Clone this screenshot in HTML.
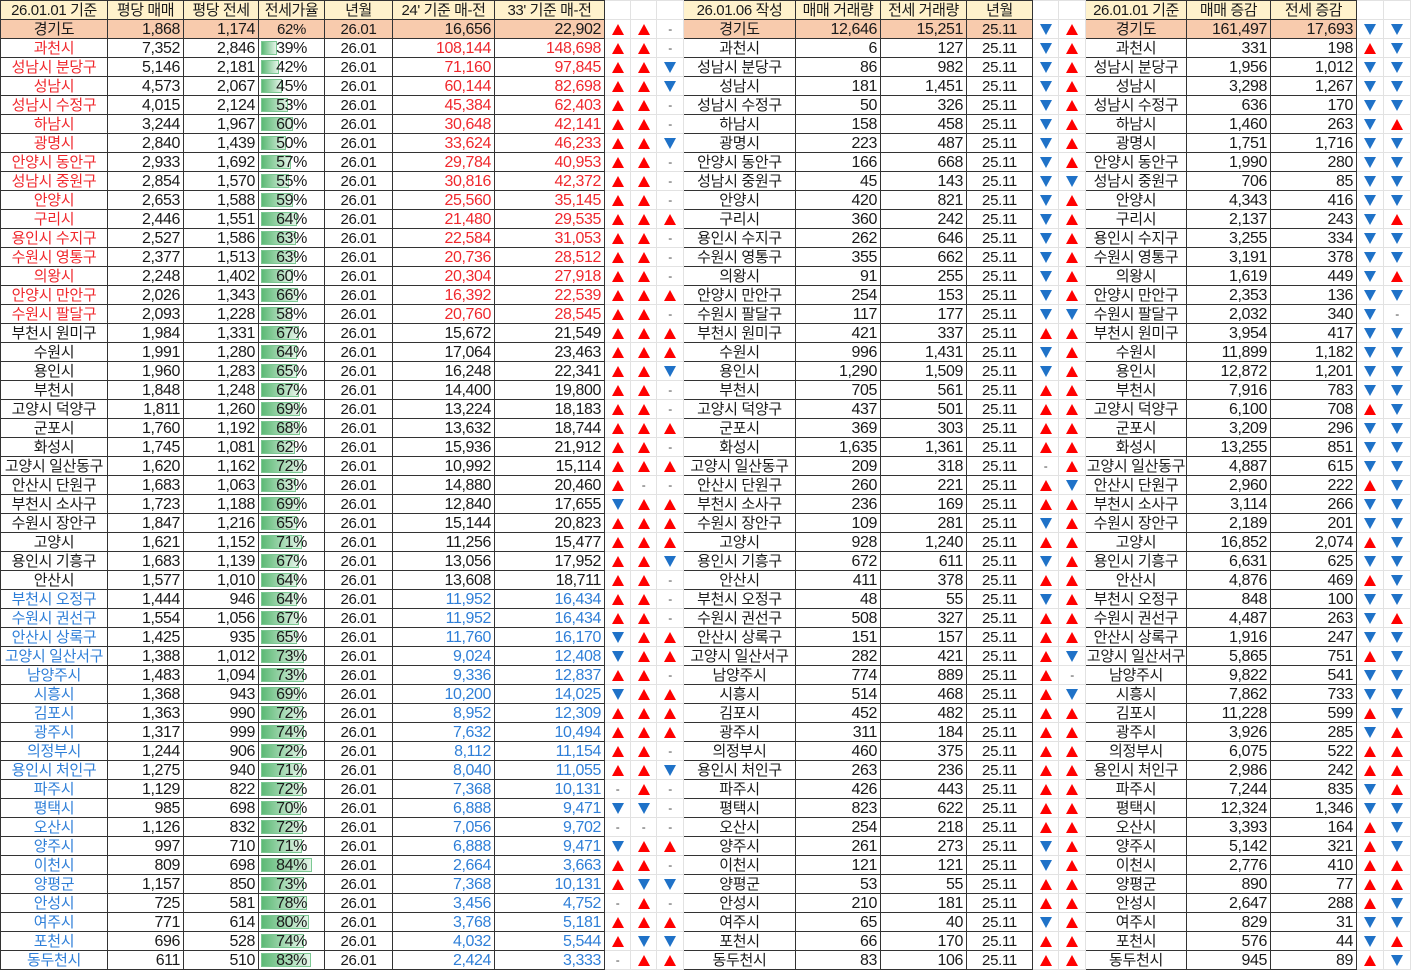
<!DOCTYPE html>
<html><head><meta charset="utf-8"><style>
body{margin:0;background:#fff;width:1411px;height:970px;overflow:hidden}
table{border-collapse:collapse;table-layout:fixed;font-family:"Liberation Sans","Noto Sans CJK KR",sans-serif;font-size:16px;color:#1a1a1a;width:1410px}
tr{height:19px}
td{border:1px solid #333;padding:0 3px 0 0;text-align:right;white-space:nowrap;overflow:hidden;line-height:17px;letter-spacing:-0.4px}
td.c{text-align:center;padding:0;font-size:15px;letter-spacing:-0.3px}
tr.h td{background:#fff2cc;text-align:center;padding:0;font-size:15px}
tr.g td{background:#f8cbad}
tr.h td.a,tr.h td.u,tr.h td.d,tr.h td.n,tr.g td.u,tr.g td.d,tr.g td.n{background:#fff}
td.u,td.d,td.n,td.a{border:1px solid #e2e2e2;text-align:center;padding:0}
td.u::after{content:"";display:inline-block;border-left:6px solid transparent;border-right:6px solid transparent;border-bottom:11px solid #f00;vertical-align:-1px}
td.d::after{content:"";display:inline-block;border-left:6px solid transparent;border-right:6px solid transparent;border-top:11px solid #1f72c8;vertical-align:-1px}
td.n::after{content:"-";font-size:12px;color:#444}
tr.R .k{color:#f0282d}
tr.B .k{color:#2f7fd8}
td.p{position:relative;text-align:center;padding:0}
td.p s{position:absolute;left:2px;top:2px;bottom:2px;background:linear-gradient(90deg,#5cb975,#e4f4e8);border:1px solid #7cc893;box-sizing:border-box}
td.p b{position:relative;font-weight:normal}
</style></head><body>
<table>
<colgroup><col style="width:107px"><col style="width:76px"><col style="width:75px"><col style="width:66px"><col style="width:68px"><col style="width:102px"><col style="width:110px"><col style="width:26px"><col style="width:26px"><col style="width:27px"><col style="width:112px"><col style="width:85px"><col style="width:86px"><col style="width:66px"><col style="width:26px"><col style="width:27px"><col style="width:101px"><col style="width:84px"><col style="width:86px"><col style="width:27px"><col style="width:27px"></colgroup>
<tr class=h><td>26.01.01 기준<td>평당 매매<td>평당 전세<td>전세가율<td>년월<td>24' 기준 매-전<td>33' 기준 매-전<td class=a><td class=a><td class=a><td>26.01.06 작성<td>매매 거래량<td>전세 거래량<td>년월<td class=a><td class=a><td>26.01.01 기준<td>매매 증감<td>전세 증감<td class=a><td class=a></tr>
<tr class=g><td class=c>경기도<td>1,868<td>1,174<td class=c>62%<td class=c>26.01<td>16,656<td>22,902<td class=u><td class=u><td class=n><td class=c>경기도<td>12,646<td>15,251<td class=c>25.11<td class=d><td class=u><td class=c>경기도<td>161,497<td>17,693<td class=d><td class=d></tr>
<tr class=R><td class="c k">과천시<td>7,352<td>2,846<td class=p><s style="width:16px"></s><b>39%</b><td class=c>26.01<td class=k>108,144<td class=k>148,698<td class=u><td class=u><td class=n><td class=c>과천시<td>6<td>127<td class=c>25.11<td class=d><td class=u><td class=c>과천시<td>331<td>198<td class=u><td class=d></tr>
<tr class=R><td class="c k">성남시 분당구<td>5,146<td>2,181<td class=p><s style="width:18px"></s><b>42%</b><td class=c>26.01<td class=k>71,160<td class=k>97,845<td class=u><td class=u><td class=d><td class=c>성남시 분당구<td>86<td>982<td class=c>25.11<td class=d><td class=u><td class=c>성남시 분당구<td>1,956<td>1,012<td class=d><td class=d></tr>
<tr class=R><td class="c k">성남시<td>4,573<td>2,067<td class=p><s style="width:21px"></s><b>45%</b><td class=c>26.01<td class=k>60,144<td class=k>82,698<td class=u><td class=u><td class=d><td class=c>성남시<td>181<td>1,451<td class=c>25.11<td class=d><td class=u><td class=c>성남시<td>3,298<td>1,267<td class=d><td class=d></tr>
<tr class=R><td class="c k">성남시 수정구<td>4,015<td>2,124<td class=p><s style="width:27px"></s><b>53%</b><td class=c>26.01<td class=k>45,384<td class=k>62,403<td class=u><td class=u><td class=n><td class=c>성남시 수정구<td>50<td>326<td class=c>25.11<td class=d><td class=u><td class=c>성남시 수정구<td>636<td>170<td class=d><td class=d></tr>
<tr class=R><td class="c k">하남시<td>3,244<td>1,967<td class=p><s style="width:32px"></s><b>60%</b><td class=c>26.01<td class=k>30,648<td class=k>42,141<td class=u><td class=u><td class=n><td class=c>하남시<td>158<td>458<td class=c>25.11<td class=d><td class=u><td class=c>하남시<td>1,460<td>263<td class=d><td class=u></tr>
<tr class=R><td class="c k">광명시<td>2,840<td>1,439<td class=p><s style="width:25px"></s><b>50%</b><td class=c>26.01<td class=k>33,624<td class=k>46,233<td class=u><td class=u><td class=d><td class=c>광명시<td>223<td>487<td class=c>25.11<td class=d><td class=u><td class=c>광명시<td>1,751<td>1,716<td class=d><td class=d></tr>
<tr class=R><td class="c k">안양시 동안구<td>2,933<td>1,692<td class=p><s style="width:30px"></s><b>57%</b><td class=c>26.01<td class=k>29,784<td class=k>40,953<td class=u><td class=u><td class=n><td class=c>안양시 동안구<td>166<td>668<td class=c>25.11<td class=d><td class=u><td class=c>안양시 동안구<td>1,990<td>280<td class=d><td class=d></tr>
<tr class=R><td class="c k">성남시 중원구<td>2,854<td>1,570<td class=p><s style="width:28px"></s><b>55%</b><td class=c>26.01<td class=k>30,816<td class=k>42,372<td class=u><td class=u><td class=n><td class=c>성남시 중원구<td>45<td>143<td class=c>25.11<td class=d><td class=d><td class=c>성남시 중원구<td>706<td>85<td class=d><td class=d></tr>
<tr class=R><td class="c k">안양시<td>2,653<td>1,588<td class=p><s style="width:32px"></s><b>59%</b><td class=c>26.01<td class=k>25,560<td class=k>35,145<td class=u><td class=u><td class=n><td class=c>안양시<td>420<td>821<td class=c>25.11<td class=d><td class=u><td class=c>안양시<td>4,343<td>416<td class=d><td class=d></tr>
<tr class=R><td class="c k">구리시<td>2,446<td>1,551<td class=p><s style="width:36px"></s><b>64%</b><td class=c>26.01<td class=k>21,480<td class=k>29,535<td class=u><td class=u><td class=u><td class=c>구리시<td>360<td>242<td class=c>25.11<td class=d><td class=u><td class=c>구리시<td>2,137<td>243<td class=d><td class=u></tr>
<tr class=R><td class="c k">용인시 수지구<td>2,527<td>1,586<td class=p><s style="width:35px"></s><b>63%</b><td class=c>26.01<td class=k>22,584<td class=k>31,053<td class=u><td class=u><td class=n><td class=c>용인시 수지구<td>262<td>646<td class=c>25.11<td class=d><td class=u><td class=c>용인시 수지구<td>3,255<td>334<td class=d><td class=d></tr>
<tr class=R><td class="c k">수원시 영통구<td>2,377<td>1,513<td class=p><s style="width:35px"></s><b>63%</b><td class=c>26.01<td class=k>20,736<td class=k>28,512<td class=u><td class=u><td class=n><td class=c>수원시 영통구<td>355<td>662<td class=c>25.11<td class=d><td class=u><td class=c>수원시 영통구<td>3,191<td>378<td class=d><td class=d></tr>
<tr class=R><td class="c k">의왕시<td>2,248<td>1,402<td class=p><s style="width:32px"></s><b>60%</b><td class=c>26.01<td class=k>20,304<td class=k>27,918<td class=u><td class=u><td class=n><td class=c>의왕시<td>91<td>255<td class=c>25.11<td class=d><td class=u><td class=c>의왕시<td>1,619<td>449<td class=d><td class=u></tr>
<tr class=R><td class="c k">안양시 만안구<td>2,026<td>1,343<td class=p><s style="width:37px"></s><b>66%</b><td class=c>26.01<td class=k>16,392<td class=k>22,539<td class=u><td class=u><td class=u><td class=c>안양시 만안구<td>254<td>153<td class=c>25.11<td class=d><td class=u><td class=c>안양시 만안구<td>2,353<td>136<td class=d><td class=d></tr>
<tr class=R><td class="c k">수원시 팔달구<td>2,093<td>1,228<td class=p><s style="width:31px"></s><b>58%</b><td class=c>26.01<td class=k>20,760<td class=k>28,545<td class=u><td class=u><td class=n><td class=c>수원시 팔달구<td>117<td>177<td class=c>25.11<td class=d><td class=d><td class=c>수원시 팔달구<td>2,032<td>340<td class=d><td class=n></tr>
<tr><td class=c>부천시 원미구<td>1,984<td>1,331<td class=p><s style="width:38px"></s><b>67%</b><td class=c>26.01<td>15,672<td>21,549<td class=u><td class=u><td class=u><td class=c>부천시 원미구<td>421<td>337<td class=c>25.11<td class=u><td class=u><td class=c>부천시 원미구<td>3,954<td>417<td class=d><td class=d></tr>
<tr><td class=c>수원시<td>1,991<td>1,280<td class=p><s style="width:36px"></s><b>64%</b><td class=c>26.01<td>17,064<td>23,463<td class=u><td class=u><td class=u><td class=c>수원시<td>996<td>1,431<td class=c>25.11<td class=d><td class=u><td class=c>수원시<td>11,899<td>1,182<td class=d><td class=d></tr>
<tr><td class=c>용인시<td>1,960<td>1,283<td class=p><s style="width:36px"></s><b>65%</b><td class=c>26.01<td>16,248<td>22,341<td class=u><td class=u><td class=d><td class=c>용인시<td>1,290<td>1,509<td class=c>25.11<td class=d><td class=u><td class=c>용인시<td>12,872<td>1,201<td class=d><td class=d></tr>
<tr><td class=c>부천시<td>1,848<td>1,248<td class=p><s style="width:38px"></s><b>67%</b><td class=c>26.01<td>14,400<td>19,800<td class=u><td class=u><td class=n><td class=c>부천시<td>705<td>561<td class=c>25.11<td class=u><td class=u><td class=c>부천시<td>7,916<td>783<td class=d><td class=d></tr>
<tr><td class=c>고양시 덕양구<td>1,811<td>1,260<td class=p><s style="width:39px"></s><b>69%</b><td class=c>26.01<td>13,224<td>18,183<td class=u><td class=u><td class=n><td class=c>고양시 덕양구<td>437<td>501<td class=c>25.11<td class=u><td class=u><td class=c>고양시 덕양구<td>6,100<td>708<td class=u><td class=d></tr>
<tr><td class=c>군포시<td>1,760<td>1,192<td class=p><s style="width:39px"></s><b>68%</b><td class=c>26.01<td>13,632<td>18,744<td class=u><td class=u><td class=u><td class=c>군포시<td>369<td>303<td class=c>25.11<td class=u><td class=u><td class=c>군포시<td>3,209<td>296<td class=d><td class=d></tr>
<tr><td class=c>화성시<td>1,745<td>1,081<td class=p><s style="width:34px"></s><b>62%</b><td class=c>26.01<td>15,936<td>21,912<td class=u><td class=u><td class=n><td class=c>화성시<td>1,635<td>1,361<td class=c>25.11<td class=u><td class=u><td class=c>화성시<td>13,255<td>851<td class=d><td class=d></tr>
<tr><td class=c>고양시 일산동구<td>1,620<td>1,162<td class=p><s style="width:42px"></s><b>72%</b><td class=c>26.01<td>10,992<td>15,114<td class=u><td class=u><td class=u><td class=c>고양시 일산동구<td>209<td>318<td class=c>25.11<td class=n><td class=u><td class=c>고양시 일산동구<td>4,887<td>615<td class=d><td class=d></tr>
<tr><td class=c>안산시 단원구<td>1,683<td>1,063<td class=p><s style="width:35px"></s><b>63%</b><td class=c>26.01<td>14,880<td>20,460<td class=u><td class=n><td class=n><td class=c>안산시 단원구<td>260<td>221<td class=c>25.11<td class=u><td class=d><td class=c>안산시 단원구<td>2,960<td>222<td class=u><td class=d></tr>
<tr><td class=c>부천시 소사구<td>1,723<td>1,188<td class=p><s style="width:39px"></s><b>69%</b><td class=c>26.01<td>12,840<td>17,655<td class=d><td class=u><td class=u><td class=c>부천시 소사구<td>236<td>169<td class=c>25.11<td class=u><td class=u><td class=c>부천시 소사구<td>3,114<td>266<td class=d><td class=d></tr>
<tr><td class=c>수원시 장안구<td>1,847<td>1,216<td class=p><s style="width:36px"></s><b>65%</b><td class=c>26.01<td>15,144<td>20,823<td class=u><td class=u><td class=u><td class=c>수원시 장안구<td>109<td>281<td class=c>25.11<td class=d><td class=u><td class=c>수원시 장안구<td>2,189<td>201<td class=d><td class=d></tr>
<tr><td class=c>고양시<td>1,621<td>1,152<td class=p><s style="width:41px"></s><b>71%</b><td class=c>26.01<td>11,256<td>15,477<td class=u><td class=u><td class=u><td class=c>고양시<td>928<td>1,240<td class=c>25.11<td class=u><td class=u><td class=c>고양시<td>16,852<td>2,074<td class=u><td class=d></tr>
<tr><td class=c>용인시 기흥구<td>1,683<td>1,139<td class=p><s style="width:38px"></s><b>67%</b><td class=c>26.01<td>13,056<td>17,952<td class=u><td class=u><td class=d><td class=c>용인시 기흥구<td>672<td>611<td class=c>25.11<td class=d><td class=u><td class=c>용인시 기흥구<td>6,631<td>625<td class=d><td class=d></tr>
<tr><td class=c>안산시<td>1,577<td>1,010<td class=p><s style="width:36px"></s><b>64%</b><td class=c>26.01<td>13,608<td>18,711<td class=u><td class=u><td class=n><td class=c>안산시<td>411<td>378<td class=c>25.11<td class=u><td class=u><td class=c>안산시<td>4,876<td>469<td class=u><td class=d></tr>
<tr class=B><td class="c k">부천시 오정구<td>1,444<td>946<td class=p><s style="width:36px"></s><b>64%</b><td class=c>26.01<td class=k>11,952<td class=k>16,434<td class=u><td class=u><td class=n><td class=c>부천시 오정구<td>48<td>55<td class=c>25.11<td class=d><td class=u><td class=c>부천시 오정구<td>848<td>100<td class=d><td class=d></tr>
<tr class=B><td class="c k">수원시 권선구<td>1,554<td>1,056<td class=p><s style="width:38px"></s><b>67%</b><td class=c>26.01<td class=k>11,952<td class=k>16,434<td class=u><td class=u><td class=n><td class=c>수원시 권선구<td>508<td>327<td class=c>25.11<td class=u><td class=u><td class=c>수원시 권선구<td>4,487<td>263<td class=d><td class=u></tr>
<tr class=B><td class="c k">안산시 상록구<td>1,425<td>935<td class=p><s style="width:36px"></s><b>65%</b><td class=c>26.01<td class=k>11,760<td class=k>16,170<td class=d><td class=u><td class=u><td class=c>안산시 상록구<td>151<td>157<td class=c>25.11<td class=u><td class=u><td class=c>안산시 상록구<td>1,916<td>247<td class=d><td class=d></tr>
<tr class=B><td class="c k">고양시 일산서구<td>1,388<td>1,012<td class=p><s style="width:43px"></s><b>73%</b><td class=c>26.01<td class=k>9,024<td class=k>12,408<td class=d><td class=u><td class=u><td class=c>고양시 일산서구<td>282<td>421<td class=c>25.11<td class=u><td class=d><td class=c>고양시 일산서구<td>5,865<td>751<td class=u><td class=d></tr>
<tr class=B><td class="c k">남양주시<td>1,483<td>1,094<td class=p><s style="width:43px"></s><b>73%</b><td class=c>26.01<td class=k>9,336<td class=k>12,837<td class=u><td class=u><td class=n><td class=c>남양주시<td>774<td>889<td class=c>25.11<td class=u><td class=n><td class=c>남양주시<td>9,822<td>541<td class=d><td class=d></tr>
<tr class=B><td class="c k">시흥시<td>1,368<td>943<td class=p><s style="width:39px"></s><b>69%</b><td class=c>26.01<td class=k>10,200<td class=k>14,025<td class=d><td class=u><td class=u><td class=c>시흥시<td>514<td>468<td class=c>25.11<td class=u><td class=d><td class=c>시흥시<td>7,862<td>733<td class=d><td class=d></tr>
<tr class=B><td class="c k">김포시<td>1,363<td>990<td class=p><s style="width:42px"></s><b>72%</b><td class=c>26.01<td class=k>8,952<td class=k>12,309<td class=u><td class=u><td class=u><td class=c>김포시<td>452<td>482<td class=c>25.11<td class=u><td class=u><td class=c>김포시<td>11,228<td>599<td class=u><td class=d></tr>
<tr class=B><td class="c k">광주시<td>1,317<td>999<td class=p><s style="width:43px"></s><b>74%</b><td class=c>26.01<td class=k>7,632<td class=k>10,494<td class=u><td class=u><td class=u><td class=c>광주시<td>311<td>184<td class=c>25.11<td class=u><td class=u><td class=c>광주시<td>3,926<td>285<td class=d><td class=u></tr>
<tr class=B><td class="c k">의정부시<td>1,244<td>906<td class=p><s style="width:42px"></s><b>72%</b><td class=c>26.01<td class=k>8,112<td class=k>11,154<td class=u><td class=u><td class=n><td class=c>의정부시<td>460<td>375<td class=c>25.11<td class=u><td class=u><td class=c>의정부시<td>6,075<td>522<td class=u><td class=u></tr>
<tr class=B><td class="c k">용인시 처인구<td>1,275<td>940<td class=p><s style="width:41px"></s><b>71%</b><td class=c>26.01<td class=k>8,040<td class=k>11,055<td class=u><td class=u><td class=d><td class=c>용인시 처인구<td>263<td>236<td class=c>25.11<td class=u><td class=u><td class=c>용인시 처인구<td>2,986<td>242<td class=u><td class=u></tr>
<tr class=B><td class="c k">파주시<td>1,129<td>822<td class=p><s style="width:42px"></s><b>72%</b><td class=c>26.01<td class=k>7,368<td class=k>10,131<td class=n><td class=u><td class=n><td class=c>파주시<td>426<td>443<td class=c>25.11<td class=u><td class=u><td class=c>파주시<td>7,244<td>835<td class=d><td class=u></tr>
<tr class=B><td class="c k">평택시<td>985<td>698<td class=p><s style="width:40px"></s><b>70%</b><td class=c>26.01<td class=k>6,888<td class=k>9,471<td class=d><td class=d><td class=n><td class=c>평택시<td>823<td>622<td class=c>25.11<td class=u><td class=u><td class=c>평택시<td>12,324<td>1,346<td class=d><td class=d></tr>
<tr class=B><td class="c k">오산시<td>1,126<td>832<td class=p><s style="width:42px"></s><b>72%</b><td class=c>26.01<td class=k>7,056<td class=k>9,702<td class=n><td class=n><td class=n><td class=c>오산시<td>254<td>218<td class=c>25.11<td class=u><td class=u><td class=c>오산시<td>3,393<td>164<td class=u><td class=d></tr>
<tr class=B><td class="c k">양주시<td>997<td>710<td class=p><s style="width:41px"></s><b>71%</b><td class=c>26.01<td class=k>6,888<td class=k>9,471<td class=d><td class=u><td class=u><td class=c>양주시<td>261<td>273<td class=c>25.11<td class=d><td class=u><td class=c>양주시<td>5,142<td>321<td class=u><td class=d></tr>
<tr class=B><td class="c k">이천시<td>809<td>698<td class=p><s style="width:51px"></s><b>84%</b><td class=c>26.01<td class=k>2,664<td class=k>3,663<td class=u><td class=u><td class=n><td class=c>이천시<td>121<td>121<td class=c>25.11<td class=d><td class=u><td class=c>이천시<td>2,776<td>410<td class=u><td class=u></tr>
<tr class=B><td class="c k">양평군<td>1,157<td>850<td class=p><s style="width:43px"></s><b>73%</b><td class=c>26.01<td class=k>7,368<td class=k>10,131<td class=u><td class=d><td class=d><td class=c>양평군<td>53<td>55<td class=c>25.11<td class=u><td class=u><td class=c>양평군<td>890<td>77<td class=u><td class=u></tr>
<tr class=B><td class="c k">안성시<td>725<td>581<td class=p><s style="width:46px"></s><b>78%</b><td class=c>26.01<td class=k>3,456<td class=k>4,752<td class=n><td class=u><td class=n><td class=c>안성시<td>210<td>181<td class=c>25.11<td class=u><td class=u><td class=c>안성시<td>2,647<td>288<td class=u><td class=d></tr>
<tr class=B><td class="c k">여주시<td>771<td>614<td class=p><s style="width:48px"></s><b>80%</b><td class=c>26.01<td class=k>3,768<td class=k>5,181<td class=u><td class=u><td class=u><td class=c>여주시<td>65<td>40<td class=c>25.11<td class=d><td class=u><td class=c>여주시<td>829<td>31<td class=d><td class=d></tr>
<tr class=B><td class="c k">포천시<td>696<td>528<td class=p><s style="width:43px"></s><b>74%</b><td class=c>26.01<td class=k>4,032<td class=k>5,544<td class=u><td class=d><td class=d><td class=c>포천시<td>66<td>170<td class=c>25.11<td class=u><td class=u><td class=c>포천시<td>576<td>44<td class=d><td class=u></tr>
<tr class=B><td class="c k">동두천시<td>611<td>510<td class=p><s style="width:50px"></s><b>83%</b><td class=c>26.01<td class=k>2,424<td class=k>3,333<td class=n><td class=u><td class=u><td class=c>동두천시<td>83<td>106<td class=c>25.11<td class=u><td class=u><td class=c>동두천시<td>945<td>89<td class=u><td class=d></tr>
</table>
</body></html>
